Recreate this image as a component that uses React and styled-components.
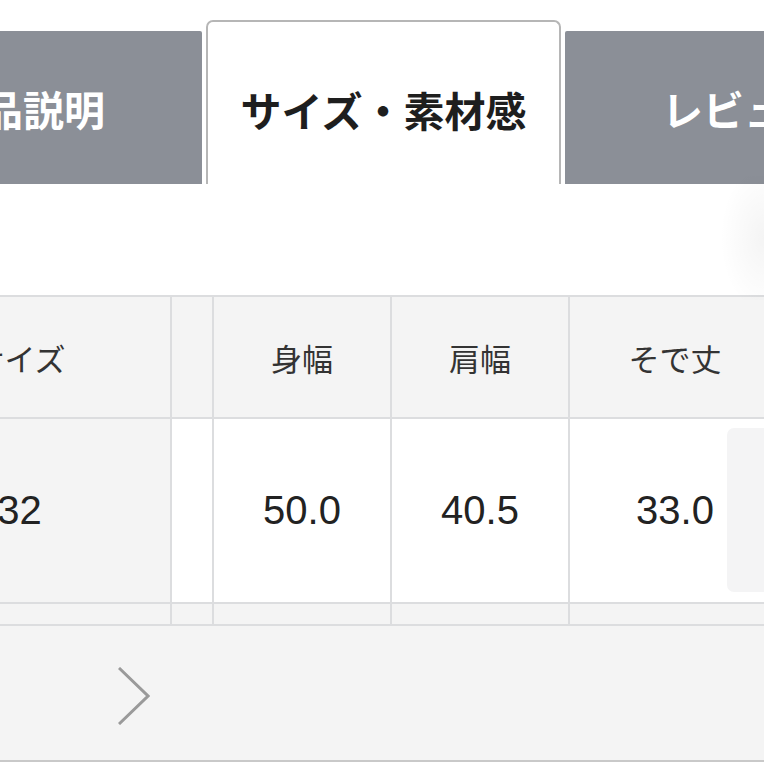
import React from 'react';
import styled, { createGlobalStyle } from 'styled-components';

const GlobalStyle = createGlobalStyle`
  html, body {
    margin: 0;
    padding: 0;
    background: #fff;
    overflow: hidden;
  }
  body {
    font-family: "Noto Sans CJK JP", "Noto Sans", sans-serif;
  }
`;

const Page = styled.div`
  position: relative;
  width: 764px;
  height: 764px;
  overflow: hidden;
  background: #fff;
`;

const TabBar = styled.div`
  display: flex;
  align-items: flex-end;
  gap: 4px;
  height: 164px;
  padding-top: 20px;
  margin-left: -156px;
`;

const Tab = styled.div`
  flex: none;
  box-sizing: border-box;
  width: ${p => (p.$active ? 355 : 358)}px;
  height: ${p => (p.$active ? 164 : 153)}px;
  display: flex;
  align-items: center;
  justify-content: center;
  padding-top: ${p => (p.$active ? 11 : 0)}px;
  background: ${p => (p.$active ? '#fff' : '#8b8f97')};
  color: ${p => (p.$active ? '#1e1e1e' : '#fff')};
  border: ${p => (p.$active ? '2px solid #b6b6b6' : 'none')};
  border-bottom: none;
  border-radius: ${p => (p.$active ? '7px 7px 0 0' : '2px 2px 0 0')};
  font-size: 41px;
  font-weight: 700;
  white-space: nowrap;
`;

const Spacer = styled.div`
  height: 111px;
`;

const Table = styled.div`
  display: grid;
  grid-template-columns: 301px 40px 176px 176px 210px;
  grid-template-rows: 120px 183px 20px;
  gap: 2px;
  padding: 2px 0;
  margin-left: -131px;
  width: max-content;
  background: #dcdddf;
`;

const Cell = styled.div`
  display: flex;
  align-items: center;
  justify-content: center;
  background: ${p => (p.$shade ? '#f4f4f4' : '#fff')};
  white-space: nowrap;
`;

const HeadText = styled.span`
  font-family: "Noto Sans CJK JP", sans-serif;
  font-size: 31px;
  color: #333;
`;

const Value = styled.span`
  font-family: "Liberation Sans", Arial, sans-serif;
  font-size: 40px;
  color: #222;
`;

const Footer = styled.div`
  display: flex;
  align-items: center;
  height: 136px;
  padding: 6px 0 0 118px;
  box-sizing: border-box;
  background: #f4f4f4;
  border-bottom: 2px solid #c9c9c9;
`;

const FloatCard = styled.div`
  position: absolute;
  left: 727px;
  top: 428px;
  width: 60px;
  height: 164px;
  border-radius: 7px;
  background: #f4f4f5;
`;

const EdgeShade = styled.div`
  position: absolute;
  right: 0;
  top: 176px;
  width: 44px;
  height: 124px;
  background: radial-gradient(ellipse 100% 60% at 100% 50%, rgba(0, 0, 0, 0.045), rgba(0, 0, 0, 0) 100%);
  pointer-events: none;
`;

const headers = ['サイズ', '', '身幅', '肩幅', 'そで丈'];
const values = ['32', '', '50.0', '40.5', '33.0'];

export default function App() {
  return (
    <Page>
      <GlobalStyle />
      <TabBar>
        <Tab>商品説明</Tab>
        <Tab $active>サイズ・素材感</Tab>
        <Tab>レビュー</Tab>
      </TabBar>
      <Spacer />
      <Table>
        {headers.map((h, i) => (
          <Cell key={'h' + i} $shade>
            <HeadText>{h}</HeadText>
          </Cell>
        ))}
        {values.map((v, i) => (
          <Cell key={'v' + i} $shade={i === 0}>
            <Value>{v}</Value>
          </Cell>
        ))}
        {headers.map((_, i) => (
          <Cell key={'n' + i} $shade />
        ))}
      </Table>
      <Footer>
        <svg width="32" height="58" viewBox="0 0 32 58" fill="none">
          <polyline points="1,1 30,29 1,57" stroke="#9a9a9a" strokeWidth="3" strokeLinejoin="miter" />
        </svg>
      </Footer>
      <FloatCard />
      <EdgeShade />
    </Page>
  );
}
